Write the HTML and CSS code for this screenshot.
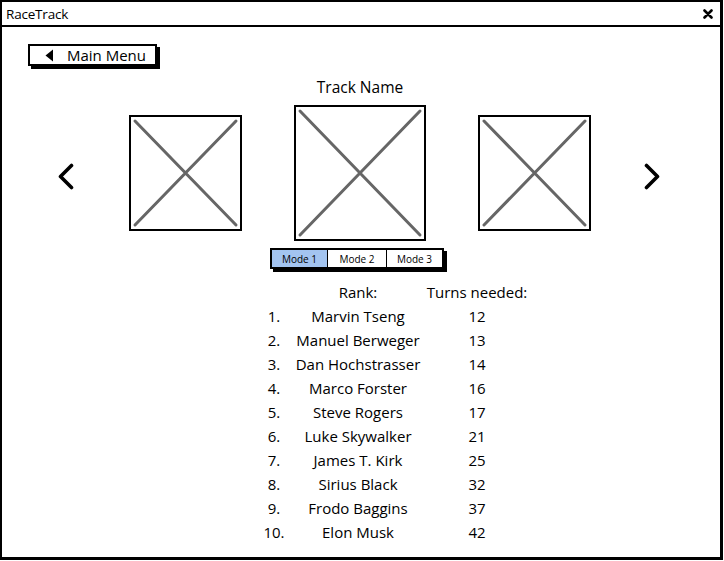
FILE: index.html
```html
<!DOCTYPE html>
<html>
<head>
<meta charset="utf-8">
<link rel="stylesheet" href="styles.css">
</head>
<body>
<div class="window">
  <div class="titlebar">
    <span class="title">RaceTrack</span>
    <svg class="close" width="10" height="10" viewBox="0 0 10 10"><path d="M1.5 1.5 L8.5 8.5 M8.5 1.5 L1.5 8.5" stroke="#000" stroke-width="2.6" stroke-linecap="round"/></svg>
  </div>
  <div class="content">
    <div class="back-row">
      <div class="back">
        <svg class="tri" width="9" height="13" viewBox="0 0 9 13"><path d="M8 0.5 L8 12.5 L0.5 6.5 Z" fill="#000"/></svg>
        <span>Main Menu</span>
      </div>
    </div>

    <div class="carousel">
      <div class="track-name">Track Name</div>
      <svg class="chev chev-left" width="16" height="27" viewBox="0 0 16 27"><polyline points="13.5,2.5 2.5,13.5 13.5,24.5" fill="none" stroke="#000" stroke-width="3.6" stroke-linecap="round" stroke-linejoin="round"/></svg>
      <div class="thumb side">
        <svg width="109" height="112" viewBox="0 0 109 112" preserveAspectRatio="none"><path d="M4 4 L105 108 M105 4 L4 108" stroke="#666" stroke-width="3" stroke-linecap="round"/></svg>
      </div>
      <div class="thumb main">
        <svg width="128" height="132" viewBox="0 0 128 132" preserveAspectRatio="none"><path d="M4 4 L124 128 M124 4 L4 128" stroke="#666" stroke-width="3" stroke-linecap="round"/></svg>
      </div>
      <div class="thumb side">
        <svg width="109" height="112" viewBox="0 0 109 112" preserveAspectRatio="none"><path d="M4 4 L105 108 M105 4 L4 108" stroke="#666" stroke-width="3" stroke-linecap="round"/></svg>
      </div>
      <svg class="chev chev-right" width="16" height="27" viewBox="0 0 16 27"><polyline points="2.5,2.5 13.5,13.5 2.5,24.5" fill="none" stroke="#000" stroke-width="3.6" stroke-linecap="round" stroke-linejoin="round"/></svg>
    </div>

    <div class="modes">
      <div class="mode active">Mode 1</div>
      <div class="mode">Mode 2</div>
      <div class="mode">Mode 3</div>
    </div>

    <div class="ranking">
      <div class="num head"></div><div class="name head">Rank:</div><div class="turns head">Turns needed:</div>
      <div class="num">1.</div><div class="name">Marvin Tseng</div><div class="turns">12</div>
      <div class="num">2.</div><div class="name">Manuel Berweger</div><div class="turns">13</div>
      <div class="num">3.</div><div class="name">Dan Hochstrasser</div><div class="turns">14</div>
      <div class="num">4.</div><div class="name">Marco Forster</div><div class="turns">16</div>
      <div class="num">5.</div><div class="name">Steve Rogers</div><div class="turns">17</div>
      <div class="num">6.</div><div class="name">Luke Skywalker</div><div class="turns">21</div>
      <div class="num">7.</div><div class="name">James T. Kirk</div><div class="turns">25</div>
      <div class="num">8.</div><div class="name">Sirius Black</div><div class="turns">32</div>
      <div class="num">9.</div><div class="name">Frodo Baggins</div><div class="turns">37</div>
      <div class="num">10.</div><div class="name">Elon Musk</div><div class="turns">42</div>
    </div>
  </div>
</div>
</body>
</html>
```
FILE: styles.css
```css
* { box-sizing: border-box; }
html, body { margin: 0; padding: 0; background: #fff; }
body {
  font-family: "Open Sans", "Liberation Sans", sans-serif;
  color: #000;
  width: 724px;
  height: 561px;
  overflow: hidden;
}
.window {
  width: 723px;
  height: 560px;
  border: 2px solid #000;
  border-right-width: 3px;
  border-bottom-width: 3px;
  display: flex;
  flex-direction: column;
}
.titlebar {
  height: 25px;
  border-bottom: 2px solid #000;
  display: flex;
  align-items: center;
  justify-content: space-between;
  padding: 0 7px 0 4px;
}
.title { font-size: 13.5px; line-height: 16px; letter-spacing: -0.2px; }
.close { display: block; }
.content {
  flex: 1;
  padding-left: 26px;
}
.back-row { padding-top: 17px; display: flex; }
.back {
  display: flex;
  align-items: center;
  width: 129px;
  height: 22px;
  border: 2px solid #000;
  box-shadow: 3px 3px 0 #000;
  padding-left: 15px;
  font-size: 15px;
}
.back .tri { margin-right: 13px; }
.carousel {
  margin-left: 30px;
  margin-top: 10px;
  display: grid;
  grid-template-columns: 19px 113px 132px 113px 16px;
  grid-template-rows: 21px auto;
  column-gap: 52px;
  row-gap: 8px;
  align-items: center;
}
.track-name {
  grid-column: 3;
  grid-row: 1;
  text-align: center;
  font-size: 15.5px;
  line-height: 20px;
  padding-top: 1px;
}
.chev { grid-row: 2; display: block; margin-top: 6px; }
.chev-right { margin-left: 1px; }
.thumb {
  grid-row: 2;
  border: 2px solid #000;
  background: #fff;
}
.thumb svg { display: block; }
.thumb.side { width: 113px; height: 116px; }
.thumb.main { width: 132px; height: 136px; }
.modes {
  margin-top: 7px;
  margin-left: 242px;
  display: flex;
  width: 174px;
  height: 21px;
  border: 2px solid #000;
  box-shadow: 3px 3px 0 #000;
}
.mode {
  font-size: 10px;
  display: flex;
  align-items: center;
  justify-content: center;
  border-left: 1.5px solid #000;
  flex: 0 0 auto;
}
.mode:nth-child(1) { width: 55px; border-left: none; }
.mode:nth-child(2) { width: 59px; }
.mode:nth-child(3) { width: 56px; }
.mode.active { background: #a3c4f0; }
.ranking {
  margin-top: 12px;
  margin-left: 232px;
  display: grid;
  grid-template-columns: 32px 132px 106px;
  font-size: 15px;
  line-height: 24px;
}
.num { text-align: center; padding-right: 4px; }
.name { text-align: center; white-space: nowrap; }
.turns { text-align: center; white-space: nowrap; }
.head { line-height: 23px; }
```
